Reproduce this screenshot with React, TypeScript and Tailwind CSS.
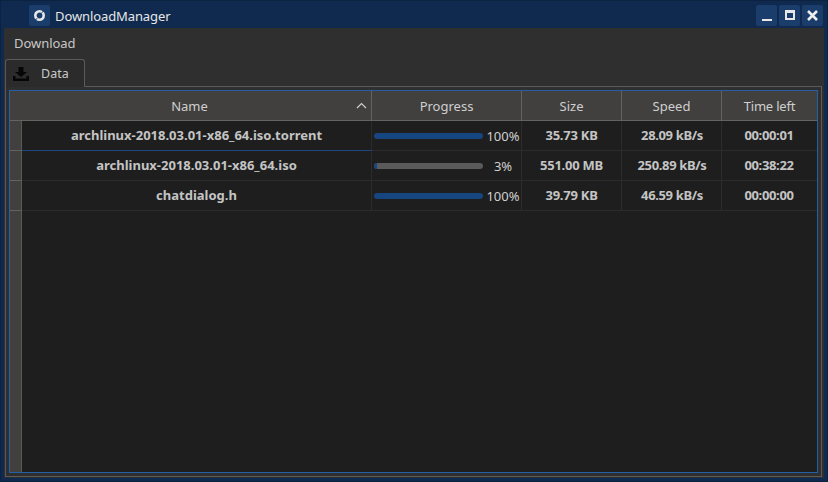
const rows = [
  { name: "archlinux-2018.03.01-x86_64.iso.torrent", pct: 100, size: "35.73 KB", speed: "28.09 kB/s", left: "00:00:01" },
  { name: "archlinux-2018.03.01-x86_64.iso", pct: 3, size: "551.00 MB", speed: "250.89 kB/s", left: "00:38:22" },
  { name: "chatdialog.h", pct: 100, size: "39.79 KB", speed: "46.59 kB/s", left: "00:00:00" },
];

const WinButton = ({ children }: { children: React.ReactNode }) => (
  <div className="w-[21px] h-[21px] rounded-[2px] bg-[#1a3d6b] flex items-center justify-center">
    {children}
  </div>
);

const HeaderCell = ({ label, className }: { label: string; className: string }) => (
  <div className={`h-full flex items-center justify-center border-r border-[#636360] ${className}`}>{label}</div>
);

const App = () => {
  return (
    <div className="w-[828px] h-[482px] bg-[#0f2a4e] border border-[#0b2240] flex flex-col overflow-hidden text-[13px] text-[#cfcfcf] font-['Noto_Sans',sans-serif]">
      {/* title bar */}
      <div className="h-[27px] shrink-0 flex items-center pl-[28px] pr-[4px] pt-[1px]">
        <div className="w-[21px] h-[21px] rounded-[2px] bg-[#1a3d6b] flex items-center justify-center">
          <svg width="13" height="13" viewBox="0 0 13 13">
            <circle cx="6.5" cy="6.5" r="4.2" fill="none" stroke="#e8e8e8" strokeWidth="2.6" />
            <path d="M8.6 3.6 L11.4 1.6 M4.4 9.4 L1.6 11.4" stroke="#1a3d6b" strokeWidth="1" />
          </svg>
        </div>
        <span className="ml-[5px] mt-[3px] tracking-[-0.1px] text-[#e6e6e6]">DownloadManager</span>
        <div className="ml-auto flex gap-[2px]">
          <WinButton>
            <div className="w-[10px] h-[2px] bg-[#e8e8e8] mt-[9px]" />
          </WinButton>
          <WinButton>
            <div className="w-[10px] h-[10px] border-2 border-t-[3px] border-[#e8e8e8]" />
          </WinButton>
          <WinButton>
            <svg width="13" height="13" viewBox="0 0 13 13">
              <path d="M2 2 L11 11 M11 2 L2 11" stroke="#eeeeee" strokeWidth="2.6" />
            </svg>
          </WinButton>
        </div>
      </div>

      {/* client area */}
      <div className="flex-1 mx-[3px] mb-[3px] bg-[#2f2f2f] flex flex-col min-h-0">
        <div className="h-[31px] shrink-0 flex items-center pl-[10px] tracking-[-0.05px] text-[#c8c8c8]">Download</div>

        {/* tab */}
        <div className="h-[28px] shrink-0 flex relative z-10">
          <div className="ml-[1px] w-[80px] h-[28px] bg-[#2b2b2b] border border-b-0 border-[#5a5a5a] rounded-t-[3px] flex items-center pl-[7px] gap-[12px] text-[12.5px] text-[#c8c8c8]">
            <svg width="16" height="14" viewBox="0 0 16 14">
              <path d="M5.5 0 H10.5 V5 H14 L8 10 L2 5 H5.5 Z M0 9 H2.5 V11.5 H13.5 V9 H16 V14 H0 Z" fill="#060606" />
            </svg>
            <span className="pt-[2px]">Data</span>
          </div>
          <div className="flex-1 border-b border-[#5a5a5a] mr-[2px]" />
        </div>

        {/* tab pane */}
        <div className="flex-1 min-h-0 ml-[1px] mr-[2px] mb-[1px] border border-t-0 border-[#5a5a5a] pt-[3px] px-[3px] pb-[3px] flex">
          <div className="flex-1 min-w-0 border border-[#2360a8] bg-[#1e1e1e] flex flex-col">
            {/* header */}
            <div className="h-[30px] shrink-0 flex bg-[#41403e] border-b border-[#636360] text-[#cfcfcf]">
              <div className="w-[12px] shrink-0 border-r border-[#41403e]" />
              <div className="w-[350px] h-full relative flex items-center justify-center pr-[14px] pt-[2px] border-r border-[#636360]">
                Name
                <svg className="absolute right-[4px] top-[11px]" width="11" height="7" viewBox="0 0 11 7">
                  <path d="M1 6 L5.5 1.5 L10 6" fill="none" stroke="#cfcfcf" strokeWidth="1.2" />
                </svg>
              </div>
              <HeaderCell label="Progress" className="w-[150px] pt-[2px]" />
              <HeaderCell label="Size" className="w-[100px] pt-[2px]" />
              <HeaderCell label="Speed" className="w-[100px] pt-[2px]" />
              <div className="flex-1 h-full flex items-center justify-center pt-[2px] tracking-[-0.2px]">Time left</div>
            </div>

            {/* rows */}
            <div className="flex-1 min-h-0 flex">
              <div className="w-[12px] shrink-0 bg-[#41403e] border-r border-[#5a5a58]">
                {rows.map((row) => (
                  <div key={row.name} className="h-[30px] border-b border-[#636360]" />
                ))}
              </div>
              <div className="flex-1 min-w-0">
                {rows.map((row, i) => (
                  <div key={row.name} className="h-[30px] flex border-b border-[#2c2c2c] font-bold text-[#c4c4c4]">
                    <div className={`w-[350px] flex items-center justify-center border-r border-[#2c2c2c] ${i === 0 ? "border-b border-b-[#1c4a80] pt-[1px] -mb-[1px]" : ""}`}>
                      {row.name}
                    </div>
                    <div className="w-[150px] flex items-center pl-[2px] border-r border-[#2c2c2c] font-normal">
                      <div className="w-[109px] h-[6px] rounded-[3px] bg-[#5a5a5a] overflow-hidden">
                        <div className="h-full bg-[#17457f]" style={{ width: `${row.pct}%` }} />
                      </div>
                      <span className="flex-1 text-center pl-[2px] pt-[2px] text-[#d0d0d0]">{row.pct}%</span>
                    </div>
                    <div className="w-[100px] flex items-center justify-center border-r border-[#2c2c2c] tracking-[-0.25px]">{row.size}</div>
                    <div className="w-[100px] flex items-center justify-center border-r border-[#2c2c2c] tracking-[-0.35px] pl-[1px]">{row.speed}</div>
                    <div className="flex-1 flex items-center justify-center tracking-[-0.35px] pr-[1px]">{row.left}</div>
                  </div>
                ))}
              </div>
            </div>
          </div>
        </div>
      </div>
    </div>
  );
};

export default App;
